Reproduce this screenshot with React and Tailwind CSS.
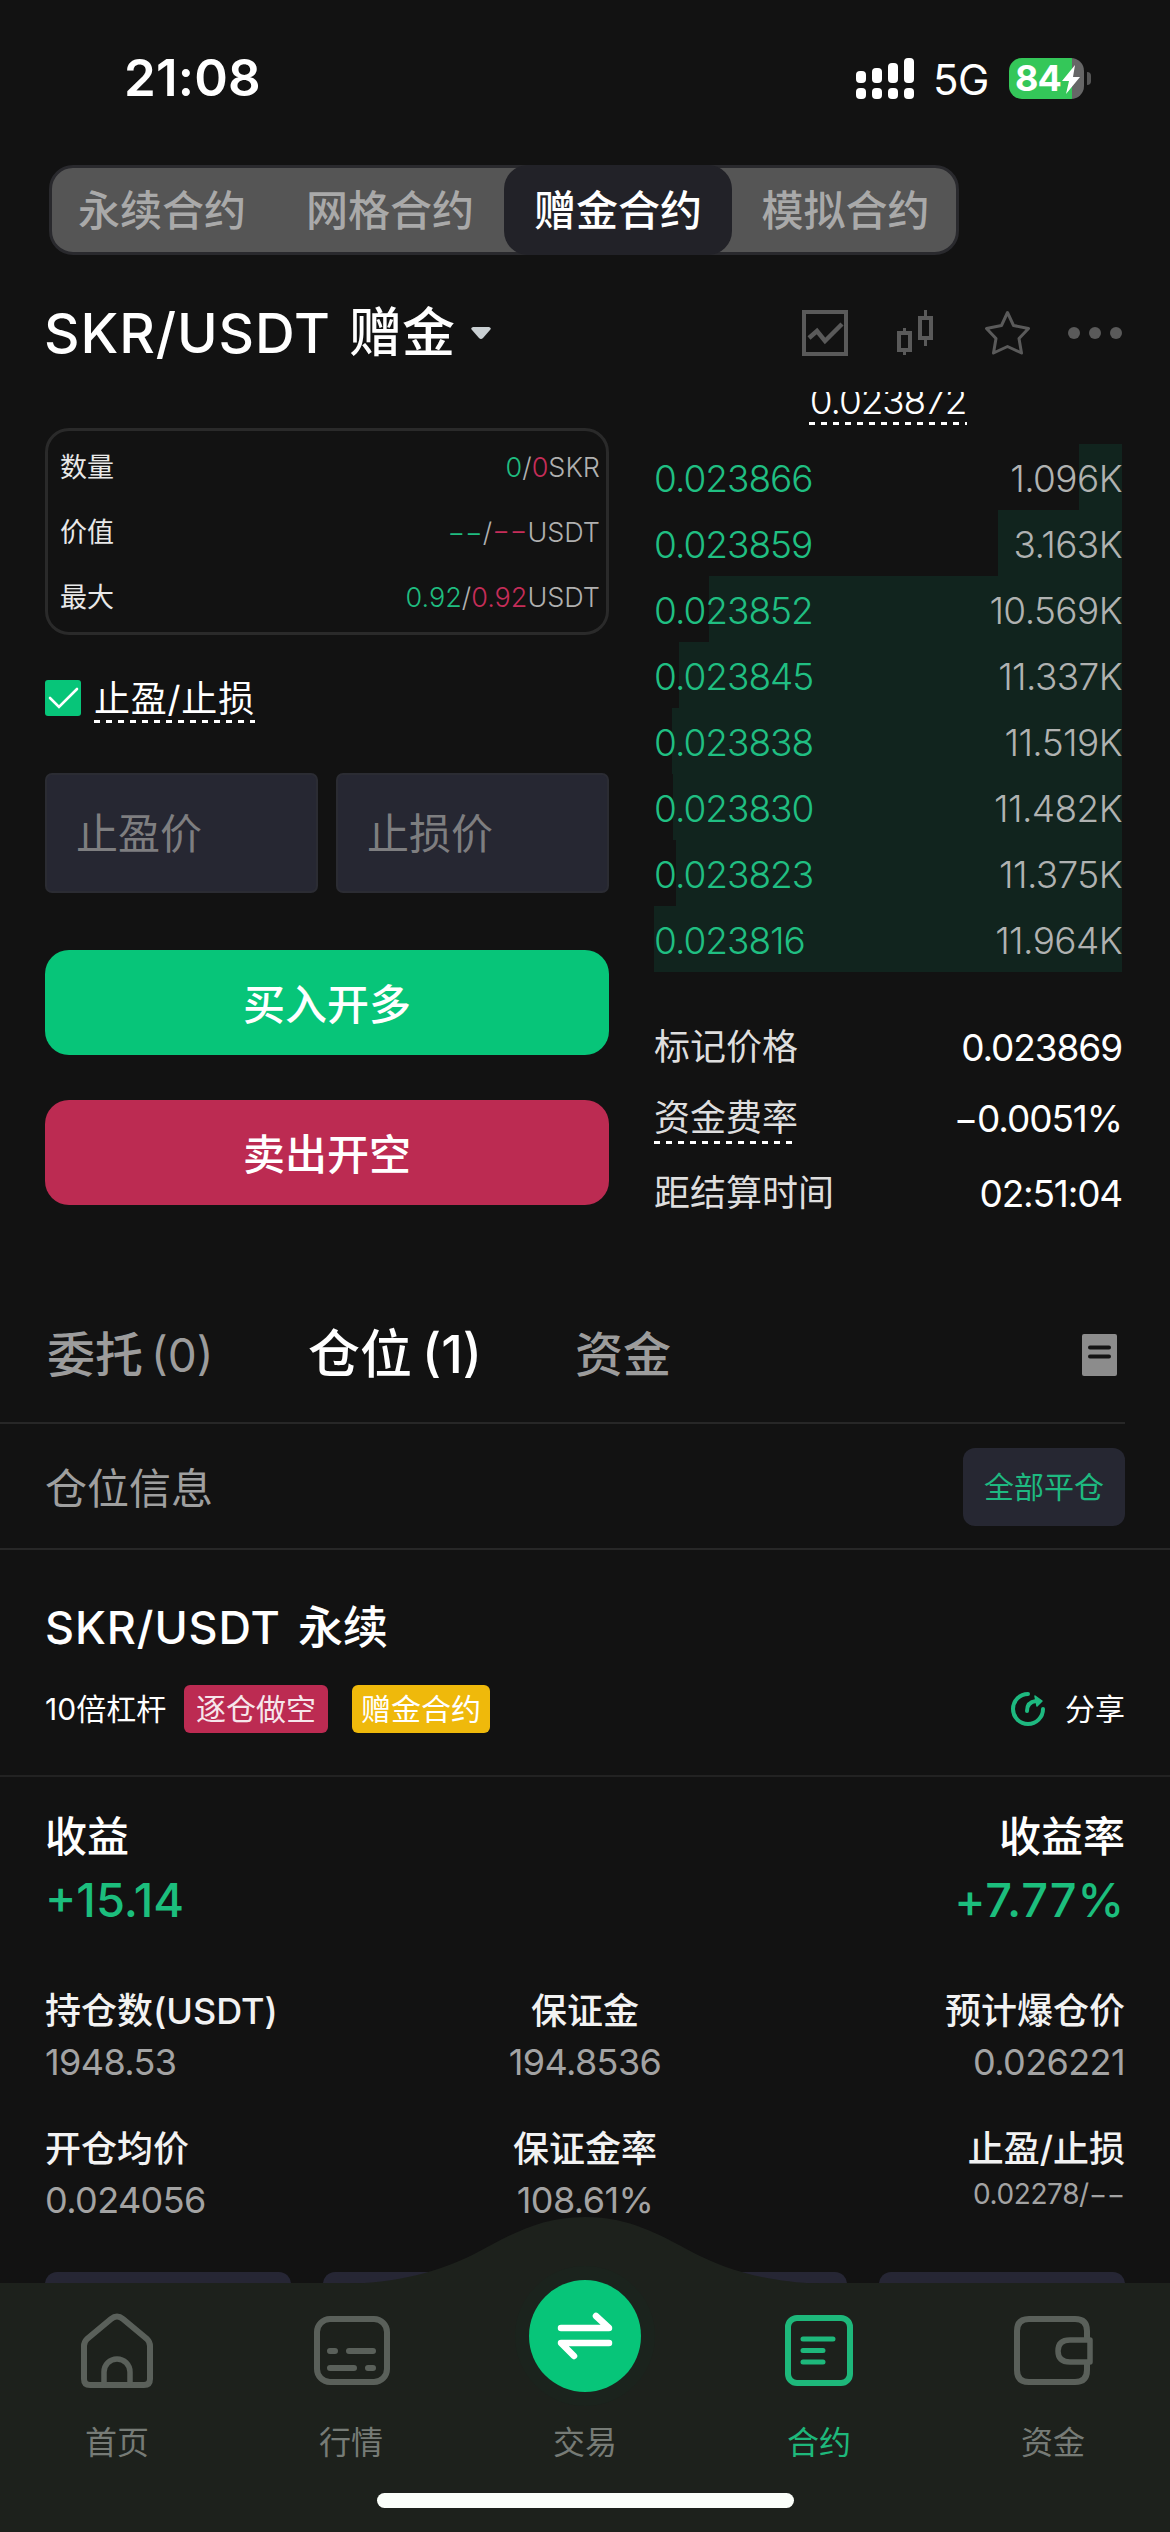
import React from "react";

const bids = [
  { price: "0.023866", amount: "1.096K", depth: 43 },
  { price: "0.023859", amount: "3.163K", depth: 124 },
  { price: "0.023852", amount: "10.569K", depth: 413 },
  { price: "0.023845", amount: "11.337K", depth: 443 },
  { price: "0.023838", amount: "11.519K", depth: 450 },
  { price: "0.023830", amount: "11.482K", depth: 449 },
  { price: "0.023823", amount: "11.375K", depth: 446 },
  { price: "0.023816", amount: "11.964K", depth: 468 },
];

const modes = [
  { name: "永续合约", style: "w-[224px] pr-[4px] text-[#a9a9a9]" },
  { name: "网格合约", style: "w-[228px] text-[#a9a9a9]" },
  { name: "赠金合约", style: "-my-[3px] w-[228px] rounded-[24px] bg-[#222228] text-white" },
  { name: "模拟合约", style: "w-[224px] pl-[3px] text-[#a9a9a9]" },
];

function Dashes({ className }) {
  return (
    <div
      className={`h-[3px] bg-[repeating-linear-gradient(90deg,#fff_0_6px,transparent_6px_12px)] ${className}`}
    />
  );
}

function StatusBar() {
  return (
    <div className="flex h-[165px] items-start justify-between pr-[79px] pl-[124px] pt-[52px]">
      <div className="text-[51px] leading-[52px] font-semibold tracking-[0.2px] text-white">21:08</div>
      <div className="flex h-[52px] items-center">
        <svg width="58" height="41" viewBox="0 0 58 41" fill="#fff">
          <rect x="0" y="13" width="10" height="12" rx="4" />
          <rect x="16" y="10" width="10" height="15" rx="4" />
          <rect x="32" y="5" width="10" height="20" rx="4" />
          <rect x="48" y="0" width="10" height="25" rx="4" />
          <rect x="0" y="30" width="10" height="11" rx="4" />
          <rect x="16" y="30" width="10" height="11" rx="4" />
          <rect x="32" y="30" width="10" height="11" rx="4" />
          <rect x="48" y="30" width="10" height="11" rx="4" />
        </svg>
        <span className="ml-[19px] w-[56px] pt-[3px] text-[42px] leading-none tracking-[-0.5px] text-white">5G</span>
        <div className="relative ml-[20px] flex h-[41px] w-[75px] items-center overflow-hidden rounded-[13px] bg-[linear-gradient(90deg,#34c759_63px,#666_63px)] pl-[6px]">
          <span className="text-[36px] leading-none font-bold tracking-[-1px] text-white">84</span>
          <svg className="absolute top-[7px] left-[52px]" width="20" height="30" viewBox="0 0 20 30">
            <path d="M14 0 L1 16 H8 L5 29 L19 12 H12 Z" fill="#fff" />
          </svg>
        </div>
        <div className="ml-[3px] h-[13px] w-[4px] rounded-r-full bg-[#555]" />
      </div>
    </div>
  );
}

function ModeTabs() {
  return (
    <div className="flex h-[90px]">
      <div className="ml-[49px] flex h-[90px] w-[910px] rounded-[24px] border-[3px] border-[#29292d] bg-[#555]">
        {modes.map((m) => (
          <div
            key={m.name}
            className={`flex shrink-0 items-center justify-center text-[42px] font-medium ${m.style}`}
          >
            {m.name}
          </div>
        ))}
      </div>
    </div>
  );
}

function PairHeader() {
  return (
    <div className="flex h-[137px] items-center justify-between pr-[48px] pb-[1px] pl-[44px] pt-[20px]">
      <div className="flex items-center text-[53px] leading-none font-medium text-white">
        <span className="w-[305px] text-[55px] tracking-[0.9px]">SKR/USDT</span>
        <span>赠金</span>
        <svg className="ml-[16px]" width="20" height="12" viewBox="0 0 20 12">
          <path d="M2 0H18Q21 1 19 3L12 11Q10 13 8 11L1 3Q-1 1 2 0Z" fill="#c9cfd2" />
        </svg>
      </div>
      <svg width="320" height="46" viewBox="0 0 320 46" fill="none" stroke="#5a5a5a">
        <rect x="2" y="2" width="42" height="42" strokeWidth="4" />
        <path d="M7 28 L15 21 L23 31 L40 14" strokeWidth="4.5" />
        <rect x="97" y="23" width="11" height="17" strokeWidth="4" />
        <path d="M102.500 18V22M102.500 41V45" strokeWidth="3" />
        <rect x="118" y="8" width="11" height="20" strokeWidth="4" />
        <path d="M123.500 0V7M123.500 29V36" strokeWidth="3" />
        <path
          d="M205.500 2.500 L211.500 15.500 L226.500 18.500 L217 28.500 L219.500 43 L205.500 36.500 L191.500 43 L194 28.500 L184.500 18.500 L199.500 15.500 Z"
          strokeWidth="3"
          strokeLinejoin="round"
        />
        <g fill="#5a5a5a" stroke="none">
          <circle cx="272" cy="23" r="6" />
          <circle cx="293" cy="23" r="6" />
          <circle cx="314" cy="23" r="6" />
        </g>
      </svg>
    </div>
  );
}

function InfoRow({ label, long, short, unit }) {
  return (
    <div className="flex h-[65px] items-center justify-between text-[27px] leading-none">
      <span className="text-[#e8e8e8]">{label}</span>
      <span className="font-light text-[#b0b0b0]">
        <span className="text-[#1fbd80]">{long}</span>/<span className="text-[#c52d59]">{short}</span>
        {unit}
      </span>
    </div>
  );
}

function OrderForm() {
  return (
    <div className="w-[564px] pt-[36px]">
      <div className="h-[207px] rounded-[24px] border-[3px] border-[#2a2a2a] pr-[6px] pl-[12px] pt-[4px]">
        <InfoRow label="数量" long="0" short="0" unit="SKR" />
        <InfoRow label="价值" long="−−" short="−−" unit="USDT" />
        <InfoRow label="最大" long="0.92" short="0.92" unit="USDT" />
      </div>
      <div className="mt-[45px] flex h-[45px] items-start">
        <svg width="36" height="36" viewBox="0 0 36 36">
          <rect width="36" height="36" rx="3" fill="#07c579" />
          <path d="M5 18 L14 27 L32 9" fill="none" stroke="#fff" strokeWidth="2.6" strokeLinecap="round" />
        </svg>
        <div className="ml-[13px] w-[161px]">
          <div className="h-[40px] text-[36px] leading-[38px] tracking-[0.8px] whitespace-nowrap text-white">止盈/止损</div>
          <Dashes className="w-[161px]" />
        </div>
      </div>
      <div className="mt-[48px] flex gap-[18px]">
        {["止盈价", "止损价"].map((t) => (
          <div
            key={t}
            className="flex h-[120px] w-[273px] items-center rounded-[7px] border-2 border-[#2b2c33] bg-[#262732] pl-[29px] text-[42px] text-[#7e7e80]"
          >
            {t}
          </div>
        ))}
      </div>
      <div className="mt-[57px] flex h-[105px] items-center justify-center rounded-[24px] bg-[#07c579] pt-[4px] text-[42px] font-medium text-white">
        买入开多
      </div>
      <div className="mt-[45px] flex h-[105px] items-center justify-center rounded-[24px] bg-[#bc2b52] pt-[4px] text-[42px] font-medium text-white">
        卖出开空
      </div>
    </div>
  );
}

function OrderBook() {
  return (
    <div className="w-[468px]">
      <div className="flex h-[51.500px] flex-col items-center overflow-hidden">
        <div className="-mt-[12px] h-[42px] text-[37px] leading-[42px] font-light tracking-[-1.1px] text-white">0.023872</div>
        <Dashes className="w-[158px]" />
      </div>
      {bids.map((b) => (
        <div key={b.price} className="relative flex h-[66px] items-center justify-between pt-[3px] text-[37px] leading-none font-light">
          <div className="absolute inset-y-0 right-0 bg-[#11241e]" style={{ width: b.depth }} />
          <span className="relative tracking-[-1px] text-[#20bf82]">{b.price}</span>
          <span className="relative tracking-[-0.6px] text-[#b0b2b1]">{b.amount}</span>
        </div>
      ))}
      <div className="mt-[40px] flex h-[71px] items-center justify-between leading-none">
        <span className="text-[36px] text-[#dedede]">标记价格</span>
        <span className="text-[37px] tracking-[-1.1px] text-white">0.023869</span>
      </div>
      <div className="flex h-[71px] items-center justify-between leading-none">
        <div className="relative text-[36px] text-[#dedede]">
          资金费率
          <Dashes className="absolute -bottom-[8px] left-0 w-[142px]" />
        </div>
        <span className="text-[37px] tracking-[-1.1px] text-white">−0.0051%</span>
      </div>
      <div className="flex h-[79px] items-center justify-between leading-none">
        <span className="text-[36px] text-[#dedede]">距结算时间</span>
        <span className="text-[37px] tracking-[-1.2px] text-white">02:51:04</span>
      </div>
    </div>
  );
}

function PositionTabs() {
  return (
    <div className="mr-[45px] flex h-[139px] items-center border-b-2 border-[#272727] pl-[47px] pt-[3px] leading-none font-medium">
      <div className="w-[261px] text-[48px] text-[#9c9c9c]">
        委托<span className="ml-[8px] text-[46px] font-normal">(0)</span>
      </div>
      <div className="w-[267px] text-[52px] text-white">
        仓位<span className="ml-[10px] text-[52px]">(1)</span>
      </div>
      <div className="text-[48px] text-[#9c9c9c]">资金</div>
      <svg className="mr-[8px] ml-auto" width="35" height="42" viewBox="0 0 35 42">
        <rect width="35" height="42" rx="2" fill="#8c8c8c" />
        <path d="M8 13.500H27M8 22.500H27" stroke="#141414" strokeWidth="4" strokeLinecap="round" />
      </svg>
    </div>
  );
}

function Stat({ label, value, align, small }) {
  return (
    <div className={`flex flex-1 flex-col leading-none whitespace-nowrap ${align}`}>
      <div className="flex h-[40px] items-center text-[36px] font-medium text-[#f2f2f2]">{label}</div>
      <div
        className={
          small
            ? "mt-[7px] flex h-[36px] items-center text-[28px] tracking-[-0.4px] text-[#a3a3a3]"
            : "mt-[13px] flex h-[36px] items-center text-[36px] tracking-[-0.6px] text-[#a3a3a3]"
        }
      >
        {value}
      </div>
    </div>
  );
}

function Position() {
  return (
    <>
      <div className="flex h-[126px] items-center justify-between border-b-2 border-[#272727] px-[45px] leading-none">
        <span className="pt-[5px] text-[42px] text-[#9f9f9f]">仓位信息</span>
        <div className="mt-[1px] flex h-[78px] w-[162px] items-center justify-center rounded-[12px] bg-[#262732] pt-[1px] text-[30px] text-[#1eb980]">
          全部平仓
        </div>
      </div>
      <div className="h-[227px] border-b-2 border-[#222] px-[45px] pt-[51px] leading-none">
        <div className="flex h-[52px] items-center text-[45px] font-medium text-white">
          <span className="w-[253px] tracking-[0.9px]">SKR/USDT</span>永续
        </div>
        <div className="mt-[32px] flex h-[48px] items-center text-[30px]">
          <span className="w-[139px] whitespace-nowrap text-white">10倍杠杆</span>
          <span className="flex h-[48px] w-[144px] items-center justify-center rounded-[6px] bg-[#bc2b52] text-[#f6e6eb]">逐仓做空</span>
          <span className="ml-[24px] flex h-[48px] w-[138px] items-center justify-center rounded-[6px] bg-[#efb90b] text-white">赠金合约</span>
          <svg className="ml-auto" width="36" height="36" viewBox="0 0 36 36" fill="none" stroke="#1eb980" strokeWidth="4" strokeLinecap="round">
            <path d="M18 3 A15 15 0 1 0 33 18" />
            <path d="M17 20 Q17 11 26 10" />
            <path d="M25 5 L32 10 L27 15 Z" fill="#1eb980" strokeWidth="1.500" strokeLinejoin="round" />
          </svg>
          <span className="ml-[19px] text-white">分享</span>
        </div>
      </div>
      <div className="flex justify-between px-[45px] pt-[36px] leading-none font-medium">
        <div>
          <div className="flex h-[48px] items-center text-[42px] text-white">收益</div>
          <div className="mt-[15px] flex h-[46px] items-center text-[47px] text-[#1cbe7d]">+15.14</div>
        </div>
        <div className="flex flex-col items-end">
          <div className="flex h-[48px] items-center text-[42px] text-white">收益率</div>
          <div className="mt-[15px] flex h-[46px] items-center text-[47px] tracking-[0.8px] text-[#1cbe7d]">+7.77%</div>
        </div>
      </div>
      <div className="mt-[69px] flex h-[89px] px-[45px]">
        <Stat label="持仓数(USDT)" value="1948.53" align="items-start" />
        <Stat label="保证金" value="194.8536" align="items-center" />
        <Stat label="预计爆仓价" value="0.026221" align="items-end" />
      </div>
      <div className="mt-[49px] flex h-[89px] px-[45px]">
        <Stat label="开仓均价" value="0.024056" align="items-start" />
        <Stat label="保证金率" value="108.61%" align="items-center" />
        <Stat label="止盈/止损" value="0.02278/−−" align="items-end" small />
      </div>
      <div className="mt-[54px] flex justify-between px-[45px]">
        {[0, 1, 2, 3].map((i) => (
          <div key={i} className="h-[78px] w-[246px] shrink-0 rounded-[12px] bg-[#262634]" />
        ))}
      </div>
    </>
  );
}

function NavItem({ label, active, children }) {
  return (
    <div className="flex w-[234px] flex-col items-center">
      <svg width="90" height="90" viewBox="0 0 90 90" fill="none" stroke={active ? "#1eb87b" : "#5a605a"} strokeWidth="6" strokeLinejoin="round" strokeLinecap="round">
        {children}
      </svg>
      <span className={active ? "mt-[29px] text-[32px] leading-[36px] text-[#1eb87b]" : "mt-[29px] text-[32px] leading-[36px] text-[#767b76]"}>
        {label}
      </span>
    </div>
  );
}

function BottomNav() {
  return (
    <div className="relative h-[249px] bg-[#1d211c]">
      <svg className="absolute -top-[66px] left-[350px]" width="470" height="67" viewBox="0 0 470 67">
        <path d="M0 67 C60 64 95 52 128 35 C160 18 190 0 235 0 C280 0 310 18 342 35 C375 52 410 64 470 67 Z" fill="#1d211c" />
      </svg>
      <div className="relative flex pt-[23px]">
        <NavItem label="首页">
          <path d="M12 40 Q12 36 15 33 L39 13 Q45 8 51 13 L75 33 Q78 36 78 40 V73 Q78 79 72 79 H18 Q12 79 12 73 Z" />
          <path d="M32 78 V66 A13 13 0 0 1 58 66 V78" strokeWidth="5.500" />
        </NavItem>
        <NavItem label="行情">
          <rect x="11" y="13" width="70" height="63" rx="13" />
          <path d="M24 45H29M43 45H67M24 62H48M62 62H67" strokeWidth="6" />
        </NavItem>
        <div className="flex w-[234px] flex-col items-center">
          <div className="-mt-[40px] mb-[10px] flex h-[140px] w-[140px] items-center justify-center rounded-full bg-[#1b231d]">
            <div className="flex h-[112px] w-[112px] items-center justify-center rounded-full bg-[#07c579]">
              <svg width="58" height="50" viewBox="0 0 58 50" fill="none" stroke="#fff" strokeWidth="6.500" strokeLinecap="round" strokeLinejoin="round">
                <path d="M5 17H53L40 5M53 32H5L18 45" />
              </svg>
            </div>
          </div>
          <span className="mt-[9px] text-[32px] leading-[36px] text-[#767b76]">交易</span>
        </div>
        <NavItem label="合约" active>
          <rect x="14" y="12" width="62" height="65" rx="9" />
          <path d="M29 33H59M29 44.500H49M29 56H49" strokeWidth="5" />
        </NavItem>
        <NavItem label="资金">
          <path d="M79 33 V25 Q79 13 67 13 H21 Q9 13 9 25 V64 Q9 76 21 76 H67 Q79 76 79 64 V57" />
          <path d="M82 34 H62 Q50 34 50 45 Q50 56 62 56 H82 Z" strokeWidth="5.500" />
        </NavItem>
      </div>
      <div className="absolute bottom-[24px] left-[377px] h-[15px] w-[417px] rounded-full bg-[#fbfffa]" />
    </div>
  );
}

export default function App() {
  return (
    <div className="h-[2532px] w-[1170px] overflow-hidden bg-[#121212] font-['Inter','Noto_Sans_CJK_SC',sans-serif]">
      <div className="h-[2283px] overflow-hidden">
        <StatusBar />
        <ModeTabs />
        <PairHeader />
        <div className="flex h-[893px] justify-between pr-[48px] pl-[45px]">
          <OrderForm />
          <OrderBook />
        </div>
        <PositionTabs />
        <Position />
      </div>
      <BottomNav />
    </div>
  );
}
